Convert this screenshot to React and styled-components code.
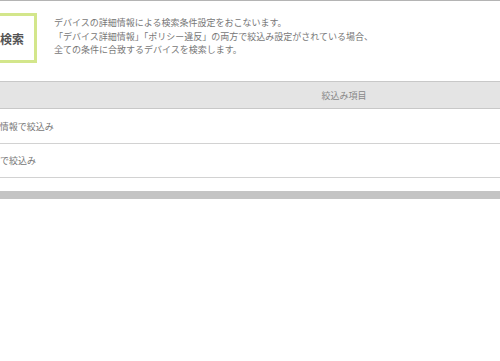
import React from "react";
import styled, { createGlobalStyle } from "styled-components";

const Global = createGlobalStyle`
  html, body { margin: 0; padding: 0; background: #fff; }
  body {
    font-family: "Noto Sans CJK JP", "Noto Sans", sans-serif;
    overflow: hidden;
  }
`;

const Viewport = styled.div`
  width: 500px;
  height: 361px;
  overflow: hidden;
  border-top: 1px solid #b4b4b4;
  box-sizing: border-box;
`;

const Canvas = styled.div`
  width: 808px;
  margin-left: -60px;
`;

const Intro = styled.section`
  display: flex;
  align-items: flex-start;
  padding: 12px 0 0 17px;
`;

const TitleBox = styled.div`
  box-sizing: border-box;
  width: 80px;
  height: 50px;
  border: 3px solid #d3e68b;
  display: flex;
  align-items: center;
  justify-content: flex-end;
  padding-right: 10px;
  font-size: 12px;
  font-weight: bold;
  color: #555;
  white-space: nowrap;
`;

const Description = styled.p`
  margin: 3px 0 0 17px;
  font-size: 9px;
  line-height: 13.5px;
  color: #777;
`;

const Table = styled.div`
  margin-top: 18px;
  border-top: 1px solid #c8c8c8;
`;

const HeaderRow = styled.div`
  height: 26px;
  background: #e4e4e4;
  border-bottom: 1px solid #c8c8c8;
  display: flex;
  align-items: center;
  justify-content: center;
  font-size: 9px;
  color: #888;
`;

const Row = styled.div`
  height: ${(p) => p.$h}px;
  border-bottom: 1px solid #d2d2d2;
  display: flex;
  align-items: center;
  padding-left: 6px;
  font-size: 9px;
  color: #777;
`;

const FooterBar = styled.div`
  margin-top: 13px;
  height: 8px;
  background: #c4c4c4;
`;

export default function App() {
  return (
    <>
      <Global />
      <Viewport>
        <Canvas>
          <Intro>
            <TitleBox>詳細検索</TitleBox>
            <Description>
              デバイスの詳細情報による検索条件設定をおこないます。
              <br />
              「デバイス詳細情報」「ポリシー違反」の両方で絞込み設定がされている場合、
              <br />
              全ての条件に合致するデバイスを検索します。
            </Description>
          </Intro>
          <Table>
            <HeaderRow>絞込み項目</HeaderRow>
            <Row $h={34}>デバイス詳細情報で絞込み</Row>
            <Row $h={33}>ポリシー違反で絞込み</Row>
          </Table>
          <FooterBar />
        </Canvas>
      </Viewport>
    </>
  );
}
